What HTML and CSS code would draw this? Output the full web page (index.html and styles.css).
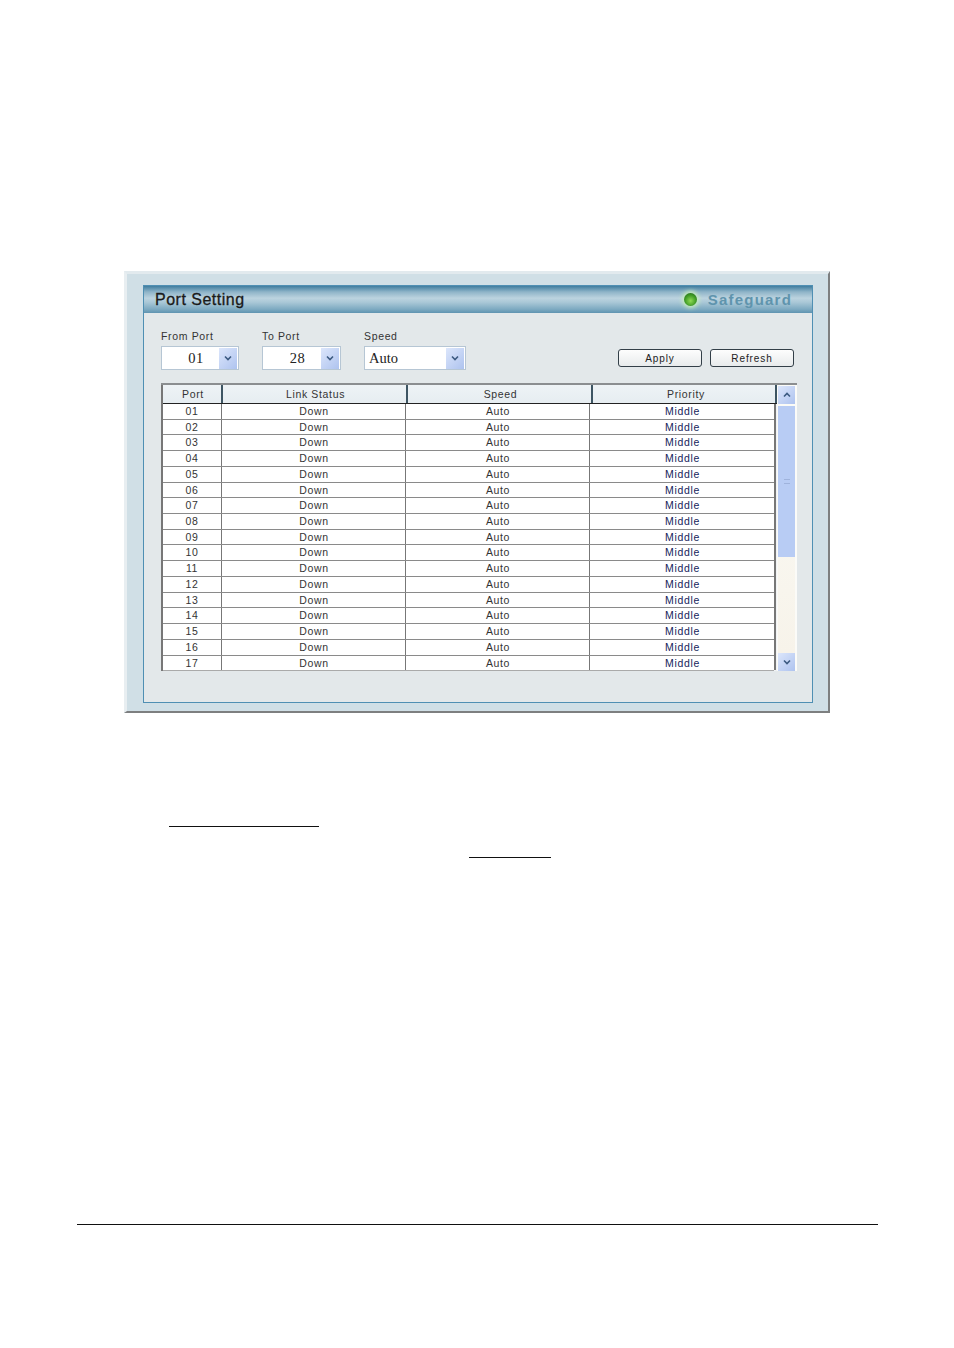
FILE: index.html
```html
<!DOCTYPE html>
<html lang="en">
<head>
<meta charset="utf-8">
<title>Port Setting</title>
<link rel="stylesheet" href="styles.css">
</head>
<body>
<section class="outer">
  <div class="panel">
    <header class="titlebar">
      <h1>Port Setting</h1>
      <div class="safeguard"><span class="led"></span><span class="sg-text">Safeguard</span></div>
    </header>
    <div class="controls">
      <div class="field f-from">
        <label>From Port</label>
        <div class="select"><span class="val center">01</span><span class="drop"><svg viewBox="0 0 8 6"><path d="M1 1.5 4 4.5 7 1.5" /></svg></span></div>
      </div>
      <div class="field f-to">
        <label>To Port</label>
        <div class="select"><span class="val center">28</span><span class="drop"><svg viewBox="0 0 8 6"><path d="M1 1.5 4 4.5 7 1.5" /></svg></span></div>
      </div>
      <div class="field f-speed">
        <label>Speed</label>
        <div class="select"><span class="val">Auto</span><span class="drop"><svg viewBox="0 0 8 6"><path d="M1 1.5 4 4.5 7 1.5" /></svg></span></div>
      </div>
      <div class="buttons">
        <button class="btn b-apply">Apply</button>
        <button class="btn b-refresh">Refresh</button>
      </div>
    </div>
    <div class="tablewrap">
      <div class="tablemain">
        <div class="thead">
          <div class="th c1">Port</div><div class="th c2">Link Status</div><div class="th c3">Speed</div><div class="th c4">Priority</div>
        </div>
        <div class="tbody">
          <div class="tr"><span class="c1">01</span><span class="c2">Down</span><span class="c3">Auto</span><span class="c4">Middle</span></div>
          <div class="tr"><span class="c1">02</span><span class="c2">Down</span><span class="c3">Auto</span><span class="c4">Middle</span></div>
          <div class="tr"><span class="c1">03</span><span class="c2">Down</span><span class="c3">Auto</span><span class="c4">Middle</span></div>
          <div class="tr"><span class="c1">04</span><span class="c2">Down</span><span class="c3">Auto</span><span class="c4">Middle</span></div>
          <div class="tr"><span class="c1">05</span><span class="c2">Down</span><span class="c3">Auto</span><span class="c4">Middle</span></div>
          <div class="tr"><span class="c1">06</span><span class="c2">Down</span><span class="c3">Auto</span><span class="c4">Middle</span></div>
          <div class="tr"><span class="c1">07</span><span class="c2">Down</span><span class="c3">Auto</span><span class="c4">Middle</span></div>
          <div class="tr"><span class="c1">08</span><span class="c2">Down</span><span class="c3">Auto</span><span class="c4">Middle</span></div>
          <div class="tr"><span class="c1">09</span><span class="c2">Down</span><span class="c3">Auto</span><span class="c4">Middle</span></div>
          <div class="tr"><span class="c1">10</span><span class="c2">Down</span><span class="c3">Auto</span><span class="c4">Middle</span></div>
          <div class="tr"><span class="c1">11</span><span class="c2">Down</span><span class="c3">Auto</span><span class="c4">Middle</span></div>
          <div class="tr"><span class="c1">12</span><span class="c2">Down</span><span class="c3">Auto</span><span class="c4">Middle</span></div>
          <div class="tr"><span class="c1">13</span><span class="c2">Down</span><span class="c3">Auto</span><span class="c4">Middle</span></div>
          <div class="tr"><span class="c1">14</span><span class="c2">Down</span><span class="c3">Auto</span><span class="c4">Middle</span></div>
          <div class="tr"><span class="c1">15</span><span class="c2">Down</span><span class="c3">Auto</span><span class="c4">Middle</span></div>
          <div class="tr"><span class="c1">16</span><span class="c2">Down</span><span class="c3">Auto</span><span class="c4">Middle</span></div>
          <div class="tr"><span class="c1">17</span><span class="c2">Down</span><span class="c3">Auto</span><span class="c4">Middle</span></div>
        </div>
      </div>
      <div class="scrollbar">
        <span class="sb-btn"><svg viewBox="0 0 8 6"><path d="M1 4.5 4 1.5 7 4.5" /></svg></span>
        <div class="sb-track">
          <div class="sb-thumb"><span class="grip"></span></div>
        </div>
        <span class="sb-btn"><svg viewBox="0 0 8 6"><path d="M1 1.5 4 4.5 7 1.5" /></svg></span>
      </div>
    </div>
  </div>
</section>
<div class="rule-a"></div>
<div class="rule-b"></div>
<div class="footer-rule"></div>
</body>
</html>
```
FILE: styles.css
```css
* { box-sizing: border-box; }
html, body { margin: 0; padding: 0; background: #fff; }
body {
  width: 954px;
  height: 1348px;
  overflow: hidden;
  padding-top: 271px;
  font-family: "Liberation Sans", Arial, sans-serif;
  color: #222;
}
.outer {
  margin-left: 124px;
  width: 706px;
  height: 442px;
  background: #d0dfe6;
  border-top: 3px solid #e2eaee;
  border-left: 3px solid #e8eef1;
  border-right: 2px solid #7d7f80;
  border-bottom: 2px solid #7d7f80;
  padding: 11px 15px 8px 16px;
}
.panel {
  width: 670px;
  height: 418px;
  background: #e3e8ea;
  border: 1px solid #4f8fb3;
}
.titlebar {
  height: 27px;
  display: flex;
  align-items: center;
  justify-content: space-between;
  padding: 0 20px 0 11px;
  background: linear-gradient(#3f7d9f 0, #8fb4c8 22%, #bcd3df 45%, #aac8d7 60%, #7fabc2 85%, #5f94b1 100%);
}
.titlebar h1 {
  margin: 0;
  font-size: 16px;
  font-weight: 400;
  letter-spacing: 0.5px;
  -webkit-text-stroke: 0.3px #1a1a1a;
  color: #1a1a1a;
}
.safeguard { display: flex; align-items: center; gap: 11px; }
.led {
  width: 13px;
  height: 13px;
  border-radius: 50%;
  background: radial-gradient(circle at 50% 60%, #8fdc55 0, #3f9a25 55%, #1d5f12 100%);
  box-shadow: 0 0 4px 2px #c9f0bd;
}
.sg-text {
  font-size: 15px;
  font-weight: 700;
  color: #5f94ad;
  letter-spacing: 1.2px;
}
.controls {
  position: relative;
  display: flex;
  padding: 17px 0 0 17px;
  height: 70px;
}
.field { display: flex; flex-direction: column; }
.field label {
  font-size: 10.5px;
  line-height: 12px;
  letter-spacing: 0.65px;
  color: #333;
  margin-bottom: 4px;
}
.f-from { width: 101px; }
.f-to { width: 102px; }
.select {
  height: 24px;
  display: flex;
  align-items: center;
  justify-content: space-between;
  background: #fff;
  border: 1px solid #b6c6d4;
  padding: 0 1px 0 4px;
}
.f-from .select { width: 78px; }
.f-to .select { width: 79px; }
.f-speed .select { width: 102px; }
.val {
  font-family: "Liberation Serif", "Times New Roman", serif;
  font-size: 14.5px;
  color: #222;
}
.val.center { flex: 1; text-align: center; padding-left: 7px; letter-spacing: 0.4px; }
.drop, .sb-btn {
  display: flex;
  align-items: center;
  justify-content: center;
  background: linear-gradient(135deg, #dce6fb, #aec3ef);
}
.drop { width: 18px; height: 21px; }
.drop svg, .sb-btn svg { width: 8px; height: 6px; }
.drop path, .sb-btn path { fill: none; stroke: #3c5a80; stroke-width: 1.6; }
.buttons {
  position: absolute;
  top: 36px;
  left: 474px;
  display: flex;
  gap: 8px;
}
.btn {
  height: 18px;
  padding: 0;
  font-family: "Liberation Sans", Arial, sans-serif;
  font-size: 10px;
  letter-spacing: 0.9px;
  color: #222;
  background: linear-gradient(#fdfdfd, #e8ebec);
  border: 1px solid #333f48;
  border-radius: 3px;
}
.b-apply { width: 84px; }
.b-refresh { width: 84px; }
.tablewrap {
  display: flex;
  margin-left: 17px;
  width: 636px;
  height: 288px;
  border-top: 2px solid #8b8e90;
  background: #f1f3f4;
}
.tablemain { width: 616px; border-left: 2px solid #777; }
.thead { display: flex; height: 19px; background: linear-gradient(#eef3f6, #e6edf1); border-bottom: 1px solid #222; }
.th {
  font-size: 10.5px;
  line-height: 18px;
  letter-spacing: 0.65px;
  text-align: center;
  color: #333;
  border-right: 2px solid #3d5563;
  flex: none;
  padding-left: 2px;
}
.th.c1 { width: 60px; }
.th.c2 { width: 185px; }
.th.c3 { width: 185px; }
.th.c4 { width: 184px; padding-left: 4px; }
.tbody { width: 613px; background: #fff; border-right: 2px solid #777; height: 266px; }
.tr {
  display: flex;
  height: 15.72px;
  border-bottom: 1px solid #8a8a8a;
  font-size: 10.5px;
  line-height: 14.5px;
  letter-spacing: 0.65px;
  color: #333;
  text-align: center;
}
.tr:last-child { border-bottom: 1px solid #aaa; }
.tr span { flex: none; border-right: 1px solid #777; padding-left: 1px; }
.tr .c1 { width: 59px; padding-left: 0; }
.tr .c2 { width: 184px; }
.tr .c3 { width: 184px; }
.tr .c4 { width: 184px; border-right: 0; color: #16245c; }
.scrollbar {
  width: 20px;
  padding: 1px 2px 0 1px;
  height: 286px;
  display: flex;
  flex-direction: column;
  background: #fbfbf8;
}
.sb-btn { height: 18px; flex: none; }
.sb-track {
  flex: 1;
  min-height: 0;
  padding-top: 2px;
  background: linear-gradient(#fbfbf6, #f7f3ea);
}
.sb-thumb {
  height: 151px;
  display: flex;
  align-items: center;
  justify-content: center;
  background: #b8ccf4;
}
.grip { width: 6px; height: 5px; border-top: 1px solid #9fb3dc; border-bottom: 1px solid #9fb3dc; }
.rule-a { margin: 113px 0 0 169px; width: 150px; height: 1px; background: #111; }
.rule-b { margin: 30px 0 0 469px; width: 82px; height: 1px; background: #111; }
.footer-rule { margin: 366px 0 0 77px; width: 801px; height: 1px; background: #111; }
```
